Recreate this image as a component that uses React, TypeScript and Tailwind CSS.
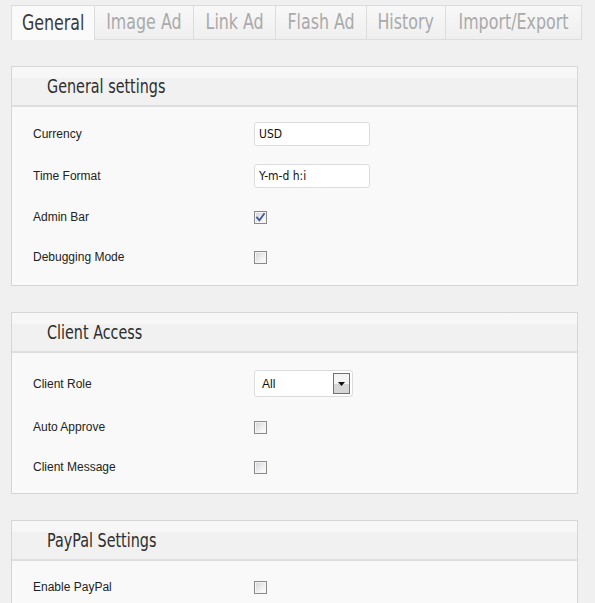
import React from "react";

const COND = "font-[family-name:'DejaVu_Sans_Condensed','Liberation_Sans_Narrow',sans-serif] font-stretch-condensed";
const LABEL = "font-[family-name:'Liberation_Sans',Arial,sans-serif] text-[12px] text-[#222]";

const tabs = [
  { name: "General", w: 84, active: true },
  { name: "Image Ad", w: 99 },
  { name: "Link Ad", w: 82 },
  { name: "Flash Ad", w: 91 },
  { name: "History", w: 79 },
  { name: "Import/Export", w: 136 },
];

function Checkbox({ checked = false }: { checked?: boolean }) {
  return (
    <div className="relative w-[13px] h-[13px] border border-[#8a8a8a] bg-[#f4f4f4]">
      <div className="absolute inset-[1px] bg-gradient-to-br from-[#d4d8de] via-[#ececec] to-[#fdfdfd]" />
      {checked && (
        <svg viewBox="0 0 13 13" className="absolute -left-[1px] -top-[1px] w-[13px] h-[13px]">
          <path d="M3 6.5 L5.4 9.2 L10 3" fill="none" stroke="#3d5a9e" strokeWidth="1.8" strokeLinecap="square" />
        </svg>
      )}
    </div>
  );
}

function TextInput({ value }: { value: string }) {
  return (
    <div className="w-[116px] h-[24px] border border-[#dcdcdc] rounded-[3px] bg-white flex items-center pl-[4px] font-[family-name:'DejaVu_Sans_Condensed','Liberation_Sans',sans-serif] font-stretch-condensed text-[12px] text-[#111]">
      {value}
    </div>
  );
}

function Select({ value }: { value: string }) {
  return (
    <div className="w-[99px] h-[27px] border border-[#dcdcdc] rounded-[3px] bg-white flex items-center justify-between pl-[7px] pr-[2px]">
      <span className="font-[family-name:'Liberation_Sans',Arial,sans-serif] text-[12px] text-[#111]">{value}</span>
      <div className="w-[17px] h-[21px] border border-[#707070] bg-gradient-to-b from-[#f4f4f4] from-50% to-[#d6d6d6] to-50% flex items-center justify-center">
        <svg viewBox="0 0 7 4" className="w-[7px] h-[4px]">
          <path d="M0 0 L7 0 L3.5 4 Z" fill="#111" />
        </svg>
      </div>
    </div>
  );
}

function Row({ label, h, children }: { label: string; h: string; children: React.ReactNode }) {
  return (
    <div className={`flex items-center ${h}`}>
      <div className={`w-[242px] pl-[21px] ${LABEL}`}>{label}</div>
      <div>{children}</div>
    </div>
  );
}

function Panel({ title, children, pt, pb }: { title: string; children: React.ReactNode; pt: string; pb: string }) {
  return (
    <div className="w-[567px] border border-[#d6d6d6] bg-[#f9f9f9]">
      <div className="h-[40px] border-b-2 border-[#dedede] bg-gradient-to-b from-[#f7f7f7] from-30% to-[#f1f1f1] to-30% flex items-center pl-[35px]">
        <span className={`${COND} inline-block origin-left scale-x-[0.84] text-[19px] text-[#2e2e2e] leading-none whitespace-nowrap`}>{title}</span>
      </div>
      <div className={`${pt} ${pb}`}>{children}</div>
    </div>
  );
}

export default function App() {
  return (
    <div className="h-[603px] overflow-hidden bg-[#f0f0f0] pl-[11px] pt-[5px]">
      <div className="flex w-[571px] h-[35px]">
        {tabs.map((t) => (
          <div
            key={t.name}
            style={{ width: t.w }}
            className={
              t.active
                ? "h-[35px] border border-[#dcdcdc] border-b-0 bg-[#fafafa] flex items-center justify-center"
                : "h-[35px] border-t border-b border-r border-[#dcdcdc] bg-gradient-to-b from-[#f8f8f8] to-[#efefef] flex items-center justify-center"
            }
          >
            <span className={`${COND} inline-block scale-x-[0.84] whitespace-nowrap text-[21px] leading-none ${t.active ? "text-[#3a3a3a]" : "text-[#aaaaaa]"}`}>
              {t.name}
            </span>
          </div>
        ))}
      </div>

      <div className="mt-[26px] flex flex-col gap-[26px]">
        <Panel title="General settings" pt="pt-[6px]" pb="pb-[8px]">
          <Row label="Currency" h="h-[42px]"><TextInput value="USD" /></Row>
          <Row label="Time Format" h="h-[42px]"><TextInput value="Y-m-d h:i" /></Row>
          <Row label="Admin Bar" h="h-[40px]"><Checkbox checked /></Row>
          <Row label="Debugging Mode" h="h-[40px]"><Checkbox /></Row>
        </Panel>

        <Panel title="Client Access" pt="pt-[7px]" pb="pb-[6px]">
          <Row label="Client Role" h="h-[47px]"><Select value="All" /></Row>
          <Row label="Auto Approve" h="h-[40px]"><Checkbox /></Row>
          <Row label="Client Message" h="h-[40px]"><Checkbox /></Row>
        </Panel>

        <Panel title="PayPal Settings" pt="pt-[6px]" pb="pb-[8px]">
          <Row label="Enable PayPal" h="h-[40px]"><Checkbox /></Row>
        </Panel>
      </div>
    </div>
  );
}
